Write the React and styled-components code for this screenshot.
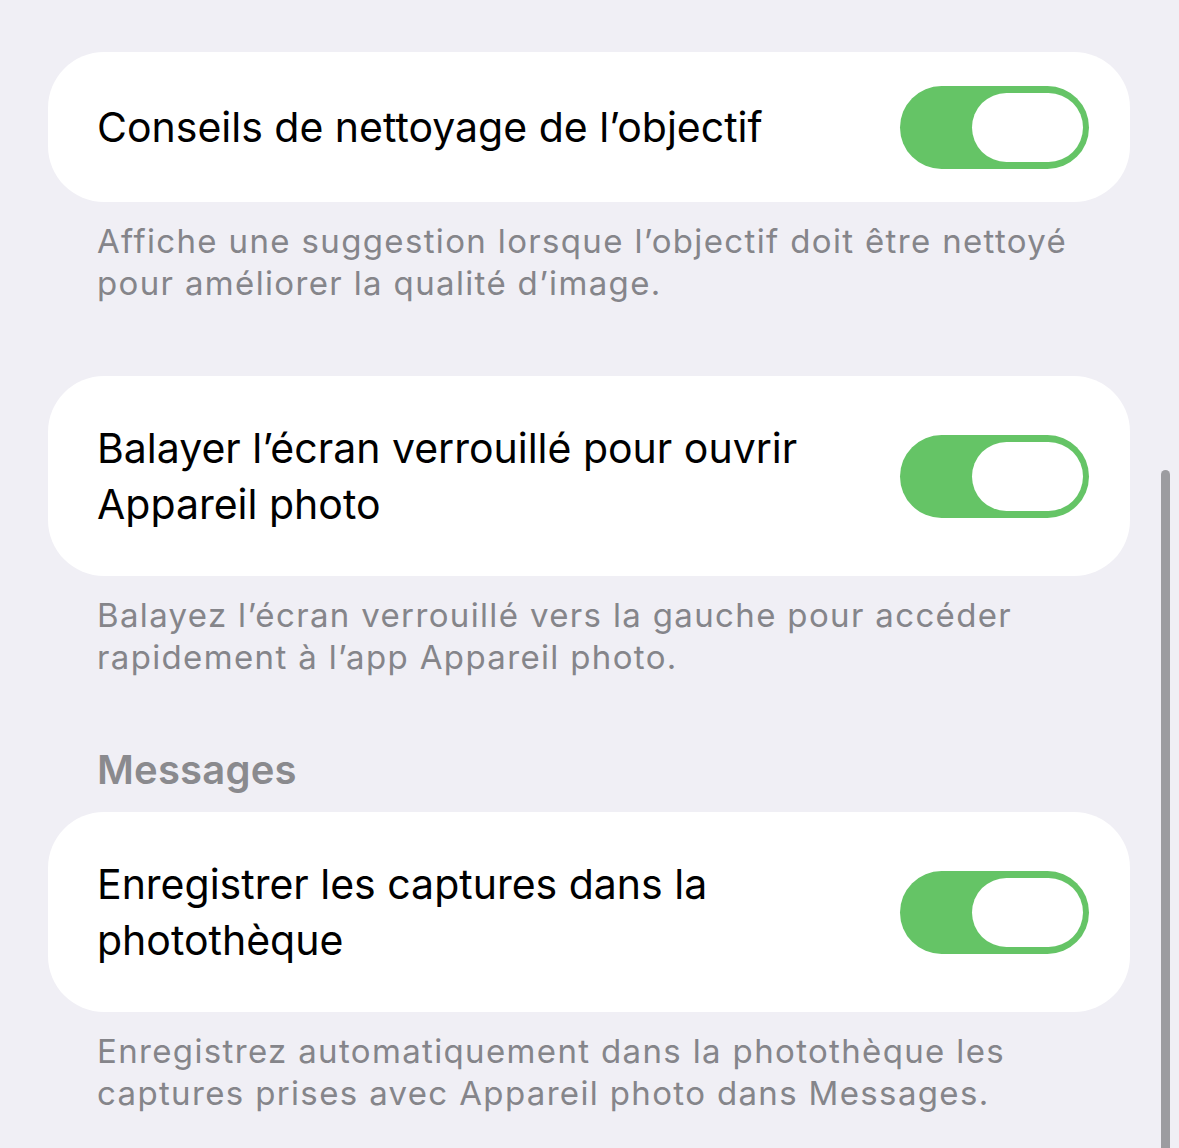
import React from "react";
import styled, { createGlobalStyle } from "styled-components";

const GlobalStyle = createGlobalStyle`
  html, body {
    margin: 0;
    padding: 0;
    background: #f0eff5;
  }
  body {
    font-family: Inter, "Noto Sans", "Liberation Sans", sans-serif;
    -webkit-font-smoothing: antialiased;
  }
`;

const Page = styled.div`
  min-height: 1148px;
  padding: 52px 49px 0 48px;
  box-sizing: border-box;
  display: flex;
  flex-direction: column;
`;

const Group = styled.section`
  display: flex;
  flex-direction: column;
  margin-bottom: ${(p) => p.$gap ?? 72}px;
`;

const GroupHeader = styled.h2`
  margin: 0 0 18px 49px;
  font-size: 40px;
  line-height: 48px;
  font-weight: 600;
  color: #8a8a8e;
  letter-spacing: 0.2px;
`;

const Card = styled.div`
  background: #ffffff;
  border-radius: 56px;
  min-height: ${(p) => p.$height}px;
  box-sizing: border-box;
  padding: 0 41px 0 49px;
  display: flex;
  align-items: center;
  justify-content: space-between;
  gap: 24px;
`;

const Label = styled.div`
  font-size: 41px;
  line-height: 56px;
  color: #000;
  letter-spacing: 0;
`;

const Footer = styled.p`
  margin: 18px 0 0 49px;
  font-size: 33px;
  line-height: 42px;
  color: #85858a;
  letter-spacing: 1.35px;
`;

const Track = styled.div`
  flex: none;
  width: 189px;
  height: 83px;
  border-radius: 42px;
  background: #65c466;
  box-sizing: border-box;
  padding: 7px 6px;
  display: flex;
  justify-content: ${(p) => (p.$on ? "flex-end" : "flex-start")};
`;

const Knob = styled.div`
  width: 111px;
  height: 69px;
  border-radius: 35px;
  background: #ffffff;
`;

const ScrollIndicator = styled.div`
  position: fixed;
  left: 1161px;
  top: 470px;
  bottom: 0;
  width: 9px;
  border-radius: 5px 5px 0 0;
  background: #9c9ca0;
`;

const Toggle = ({ on = true }) => (
  <Track $on={on}>
    <Knob />
  </Track>
);

const rows = [
  {
    label: ["Conseils de nettoyage de l’objectif"],
    footer: [
      "Affiche une suggestion lorsque l’objectif doit être nettoyé",
      "pour améliorer la qualité d’image.",
    ],
    height: 150,
    gap: 72,
  },
  {
    label: ["Balayer l’écran verrouillé pour ouvrir", "Appareil photo"],
    footer: [
      "Balayez l’écran verrouillé vers la gauche pour accéder",
      "rapidement à l’app Appareil photo.",
    ],
    height: 200,
    gap: 68,
  },
  {
    header: "Messages",
    label: ["Enregistrer les captures dans la", "photothèque"],
    footer: [
      "Enregistrez automatiquement dans la photothèque les",
      "captures prises avec Appareil photo dans Messages.",
    ],
    height: 200,
    gap: 0,
  },
];

const Lines = ({ lines }) =>
  lines.map((l, i) => (
    <React.Fragment key={i}>
      {i > 0 && <br />}
      {l}
    </React.Fragment>
  ));

export default function App() {
  return (
    <>
      <GlobalStyle />
      <Page>
        {rows.map((r, i) => (
          <Group key={i} $gap={r.gap}>
            {r.header && <GroupHeader>{r.header}</GroupHeader>}
            <Card $height={r.height}>
              <Label>
                <Lines lines={r.label} />
              </Label>
              <Toggle on />
            </Card>
            <Footer>
              <Lines lines={r.footer} />
            </Footer>
          </Group>
        ))}
      </Page>
      <ScrollIndicator />
    </>
  );
}
